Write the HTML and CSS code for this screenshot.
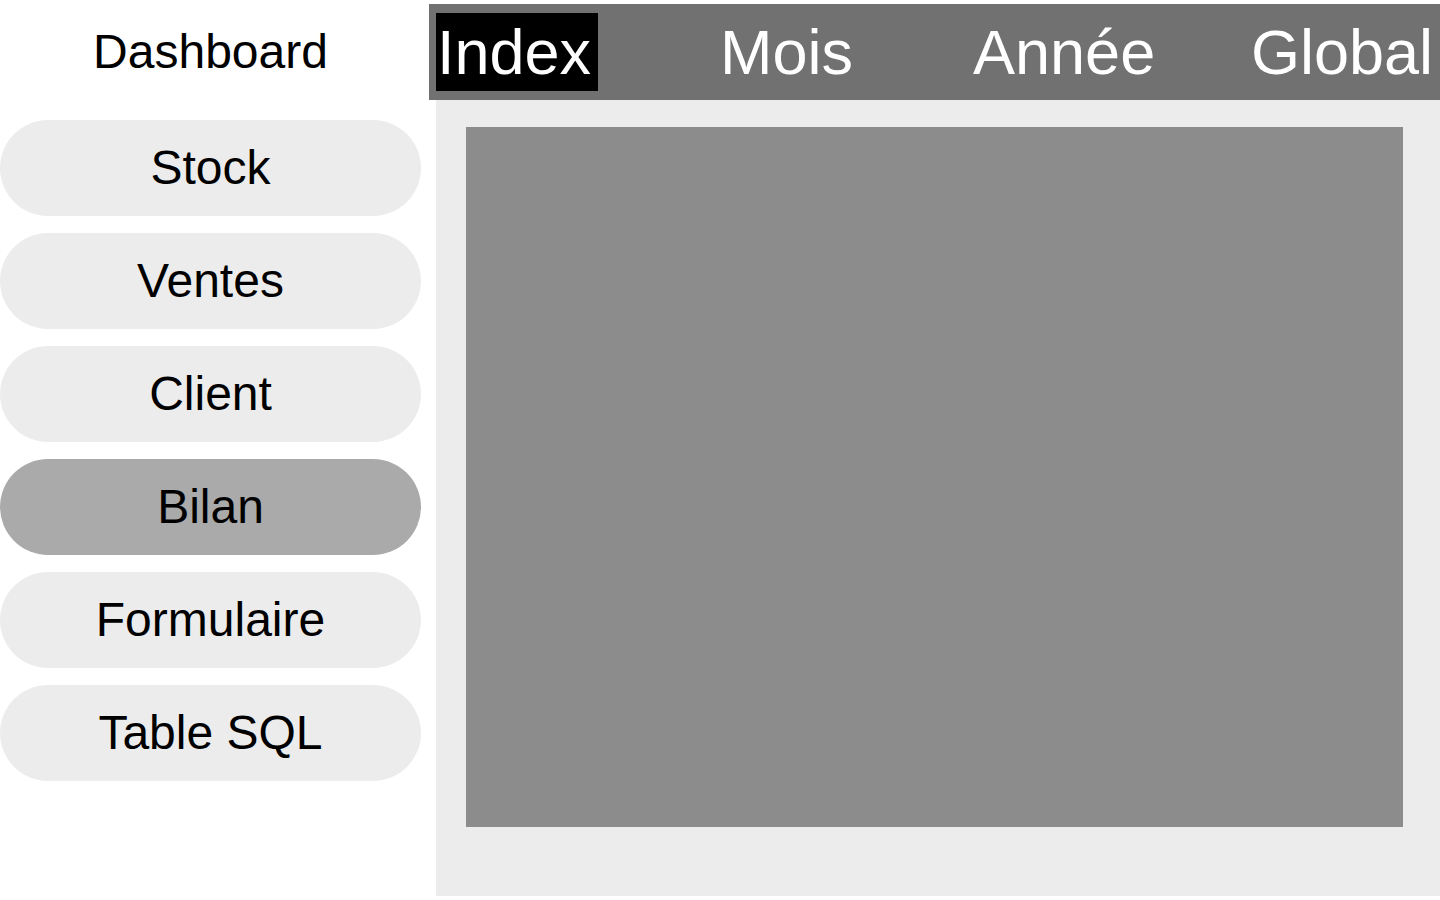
FILE: index.html
```html
<!DOCTYPE html>
<html lang="fr">
<head>
    <meta charset="UTF-8">
    <meta name="viewport" content="width=device-width, initial-scale=1.0">
    <title>Dashboard</title>
    <link rel="stylesheet" href="styles.css">
</head>
<body>
    <div class="page">
        <div class="sidebar">
            <h1 class="title">Dashboard</h1>
            <ul class="menu">
                <li><a href="#stock">Stock</a></li>
                <li><a href="#ventes">Ventes</a></li>
                <li><a href="#client">Client</a></li>
                <li><a href="#bilan" class="active">Bilan</a></li>
                <li><a href="#formulaire">Formulaire</a></li>
                <li><a href="#table-sql">Table SQL</a></li>
            </ul>
        </div>
        <div class="main">
            <div class="tabs">
                <a href="#index" class="active">Index</a>
                <a href="#mois">Mois</a>
                <a href="#annee">Année</a>
                <a href="#global">Global</a>
            </div>
            <div class="content">
                <div class="panel"></div>
            </div>
        </div>
    </div>
</body>
</html>
```

FILE: styles.css
```css
body {
    font-family: "Liberation Sans", Arial, sans-serif;
    margin: 0;
    padding: 0;
    background-color: #fff;
}
.page {
    display: grid;
    grid-template-columns: 421px 1fr;
    column-gap: 8px;
    height: 900px;
}
.title {
    height: 104px;
    margin: 0 0 16px 0;
    display: flex;
    align-items: center;
    justify-content: center;
    font-size: 48px;
    font-weight: normal;
    line-height: 1;
    color: #000;
}
.menu {
    list-style-type: none;
    margin: 0;
    padding: 0;
    display: flex;
    flex-direction: column;
    gap: 17px;
}
.menu a {
    display: flex;
    align-items: center;
    justify-content: center;
    height: 96px;
    border-radius: 48px;
    background-color: #ececec;
    color: #000;
    text-decoration: none;
    font-size: 48px;
    line-height: 1;
}
.menu a.active {
    background-color: #aaaaaa;
}
.main {
    display: flex;
    flex-direction: column;
    padding: 4px 0;
}
.tabs {
    height: 96px;
    background-color: #717171;
    display: grid;
    grid-template-columns: 283px 253px 278px 1fr;
    align-items: center;
    padding-left: 7px;
}
.tabs a {
    justify-self: start;
    padding: 0 7px 0 1px;
    font-size: 63px;
    line-height: 78px;
    color: #fff;
    text-decoration: none;
}
.tabs a.active {
    background-color: #000;
}
.content {
    flex: 1;
    margin-left: 7px;
    background-color: #ececec;
    padding: 27px 37px 69px 30px;
}
.panel {
    height: 100%;
    background-color: #8c8c8c;
}
```
